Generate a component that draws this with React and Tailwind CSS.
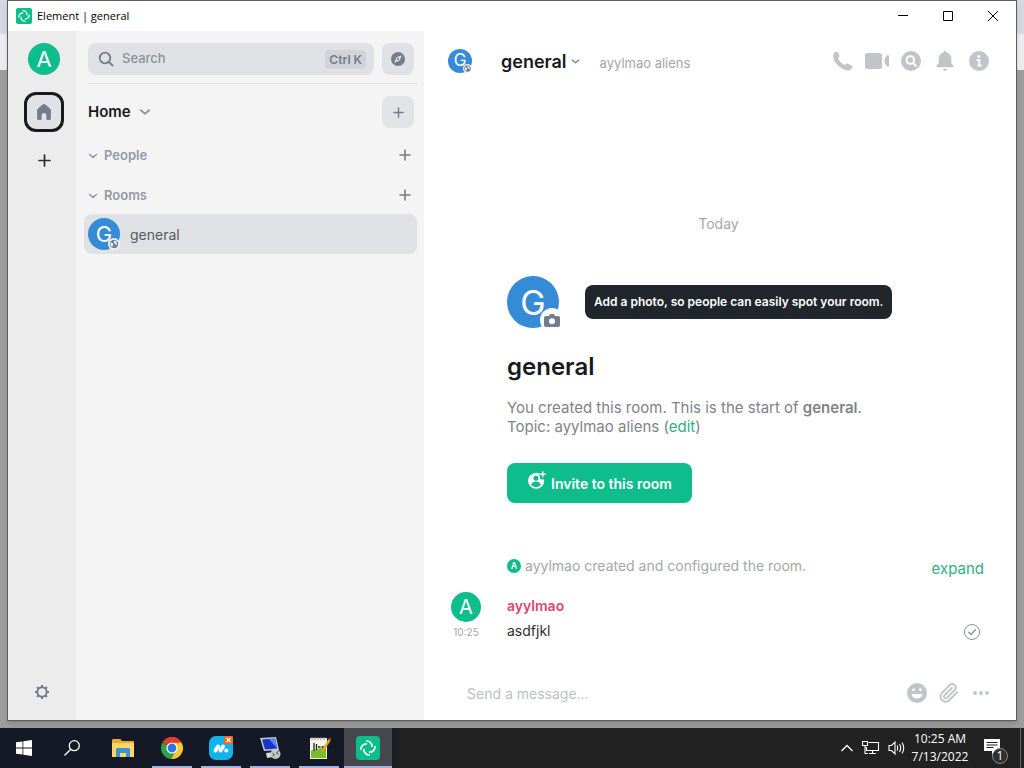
import React from "react";

function ElementMark({ className }) {
  return (
    <svg viewBox="0 0 54 54" className={className} fill="none" stroke="currentColor" strokeWidth="5.6" strokeLinecap="round" aria-hidden="true">
      {[0, 90, 180, 270].map((a) => (
        <path key={a} d="M22.68 3.24A18.36 18.36 0 0 1 41.04 21.6" transform={`rotate(${a} 27 27)`} />
      ))}
    </svg>
  );
}

function Plus({ className }) {
  return (
    <svg viewBox="0 0 12 12" className={className} fill="none" stroke="currentColor" strokeWidth="1.6" strokeLinecap="round" aria-hidden="true">
      <path d="M6 1v10M1 6h10" />
    </svg>
  );
}

function Chevron({ className }) {
  return (
    <svg viewBox="0 0 10 10" className={className} fill="none" stroke="currentColor" strokeWidth="1.6" strokeLinecap="round" strokeLinejoin="round" aria-hidden="true">
      <path d="M1.5 3.500 5 6.400l3.500-2.900" />
    </svg>
  );
}

function Globe({ className }) {
  return (
    <svg viewBox="0 0 12 12" className={className} aria-hidden="true">
      <circle cx="6" cy="6" r="6" fill="#f4f5f6" />
      <circle cx="6" cy="6" r="4.3" fill="#737d8c" />
      <path d="M2.6 4.2 5 5.4l.4 1.4-1 1 .1 1.7L2.6 7.6zM6 2.4l2.8 1.2-.6 1.4 1.3 1.6-1.3.4-1.1-1.3L6 5z" fill="#f4f5f6" />
    </svg>
  );
}

function RoomAvatar({ size, text, badge }) {
  return (
    <span className={`relative flex shrink-0 items-center justify-center rounded-full bg-[#368bd6] text-white ${size} ${text}`}>
      G
      <Globe className={`absolute right-0 bottom-0 ${badge}`} />
    </span>
  );
}

function UserAvatar({ className }) {
  return <span className={`flex shrink-0 items-center justify-center rounded-full bg-[#0dbd8b] text-white ${className}`}>A</span>;
}

function TitleBar() {
  return (
    <header className="flex h-[30px] shrink-0 items-center bg-white pr-px pl-2 font-['Open_Sans',sans-serif] text-black">
      <span className="flex size-4 items-center justify-center rounded-xs bg-[#0dbd8b] text-white">
        <ElementMark className="size-3" />
      </span>
      <h1 className="ml-[5px] grow text-[11px]">Element | general</h1>
      <button aria-label="Minimize" className="flex h-full w-[45px] items-center justify-center">
        <svg viewBox="0 0 10 10" className="size-[10px]" stroke="currentColor"><path d="M0 4.5h10" /></svg>
      </button>
      <button aria-label="Maximize" className="flex h-full w-[45px] items-center justify-center">
        <svg viewBox="0 0 10 10" className="size-[10px]" fill="none" stroke="currentColor"><path d="M.5.5h9v9h-9z" /></svg>
      </button>
      <button aria-label="Close" className="flex h-full w-[45px] items-center justify-center">
        <svg viewBox="0 0 10 10" className="size-[10px]" stroke="currentColor"><path d="M0 0l10 10M10 0L0 10" /></svg>
      </button>
    </header>
  );
}

function SpaceRail() {
  return (
    <nav aria-label="Spaces" className="flex w-[68px] shrink-0 flex-col items-center bg-[#ececec] pt-3 pr-1 pl-2 pb-4">
      <button aria-label="User menu"><UserAvatar className="size-8 text-[22px]" /></button>
      <button aria-label="Home" className="mt-[17px] flex size-10 items-center justify-center rounded-xl border-3 border-[#17191c] bg-[#e0e2e8] text-[#737d8c]">
        <svg viewBox="0 0 16 18" className="h-[18px] w-4" fill="currentColor">
          <path d="M7 1.300a1.600 1.600 0 0 1 2 0l5 4.300c.6.5.9 1.200.9 1.900v8c0 .8-.6 1.500-1.400 1.500h-2.300c-.5 0-.8-.3-.8-.8v-3.700a2.400 2.400 0 0 0-4.800 0v3.700c0 .5-.3.8-.8.8H2.500c-.8 0-1.400-.7-1.400-1.500v-8c0-.7.300-1.400.9-1.900z" />
        </svg>
      </button>
      <button aria-label="Create a space" className="mt-2 flex size-10 items-center justify-center text-[#2b2d31]">
        <Plus className="size-[13px]" />
      </button>
      <button aria-label="Quick settings" className="mt-auto mr-1 flex size-6 items-center justify-center text-[#737d8c]">
        <svg viewBox="0 0 16 16" className="size-4" fill="none" stroke="currentColor">
          <circle cx="8" cy="8" r="4.700" strokeWidth="1.900" />
          <path d="M8 1v2.500M8 12.500V15M1 8h2.500M12.500 8H15M3.050 3.050l1.800 1.800M11.150 11.150l1.800 1.800M3.050 12.950l1.800-1.800M11.150 4.850l1.800-1.800" strokeWidth="2" />
        </svg>
      </button>
    </nav>
  );
}

function SectionHeader({ label }) {
  return (
    <div className="flex h-10 items-center pr-1.5">
      <button className="flex grow items-center text-[13px] font-semibold text-[#929aa5]">
        <Chevron className="mr-1.5 size-[10px]" />
        {label}
      </button>
      <button aria-label={`Add ${label}`} className="pb-0.5 text-[#737d8c]"><Plus className="size-3" /></button>
    </div>
  );
}

function RoomList() {
  return (
    <aside className="flex w-[348px] shrink-0 flex-col bg-[#f4f4f5] pt-3 pr-[7px] pl-3">
      <div className="flex gap-2 pr-[3px]">
        <div className="flex h-8 grow items-center rounded-lg bg-[#dfe1e5] pr-2 pl-[10px]">
          <svg viewBox="0 0 16 16" className="size-4 text-[#737d8c]" fill="none" stroke="currentColor" strokeWidth="1.800" strokeLinecap="round" aria-hidden="true">
            <circle cx="7" cy="7" r="5.300" /><path d="m11 11 3.500 3.500" />
          </svg>
          <input aria-label="Search" placeholder="Search" className="ml-2 w-10 grow bg-transparent text-[13px] font-medium outline-none placeholder:text-[#8b929c]" />
          <kbd className="rounded bg-[#d0d4d9] px-1 font-[Inter,sans-serif] text-[12px] leading-[19px] font-semibold text-[#737d8c]">Ctrl K</kbd>
        </div>
        <button aria-label="Explore rooms" className="flex size-8 items-center justify-center rounded-lg bg-[#dfe1e6]">
          <svg viewBox="0 0 14 14" className="size-[14px]">
            <circle cx="7" cy="7" r="7" fill="#737d8c" />
            <path d="m10.800 3.200-2.200 5.400-5.400 2.200 2.200-5.400z" fill="#e3e6eb" />
            <circle cx="7" cy="7" r="1.100" fill="#737d8c" />
          </svg>
        </button>
      </div>
      <hr className="mt-2 border-[#e1e3e6]" />
      <div className="mt-3 mb-2 flex h-8 items-center justify-between pr-[3px]">
        <button className="flex items-center gap-2 text-[15px] font-semibold text-[#17191c]">
          Home<Chevron className="size-3 text-[#8d97a5]" />
        </button>
        <button aria-label="Add" className="flex size-8 items-center justify-center rounded-lg bg-[#e1e3e6] text-[#737d8c]"><Plus className="size-[11px]" /></button>
      </div>
      <SectionHeader label="People" />
      <SectionHeader label="Rooms" />
      <a href="#general" className="-mt-0.5 -ml-1 flex h-10 items-center gap-[10px] rounded-lg bg-[#e0e1e4] pl-1 text-[14px] text-[#565a60]">
        <RoomAvatar size="size-8" text="text-[22px]" badge="size-3" />
        general
      </a>
    </aside>
  );
}

function RoomHeader() {
  const cls = "size-5";
  return (
    <header className="flex h-15 shrink-0 items-center pr-[27px] pl-6">
      <RoomAvatar size="size-6" text="text-[17px]" badge="size-[9px]" />
      <button className="ml-[29px] flex items-center gap-1 text-[18px] font-semibold text-[#17191c]">
        general<Chevron className="size-[9px] text-[#838b97]" />
      </button>
      <span className="ml-5 grow pt-1.5 text-[13px] text-[#a3a6aa]">ayylmao aliens</span>
      <div className="flex gap-[14px] text-[#c1c5ca]">
        <button aria-label="Voice call">
          <svg viewBox="0 0 20 20" className={cls} fill="currentColor">
            <path d="M.7 2.700C1.300 1.500 2.600.4 3.500.4c.6 0 1 .5 1.400 1.200l1.500 2.600c.4.700.2 1.300-.2 1.800l-.9 1c-.2.3-.2.7 0 1.100 1.300 2.500 3.300 4.400 5.700 5.700.4.2.800.2 1.100 0l1.200-1c.5-.4 1.100-.5 1.700-.100l3.200 1.900c.8.5 1.300.9 1.300 1.500 0 1.200-1.700 3.200-3.700 3.400C9.500 19.900.4 12.500.2 5.300c0-1 .1-1.900.5-2.600z" />
          </svg>
        </button>
        <button aria-label="Video call">
          <svg viewBox="0 0 24 20" className="-mx-0.5 h-5 w-6" fill="currentColor">
            <rect x="0" y="2" width="17" height="16" rx="2.500" />
            <path d="M24 5.500v9c0 1.100-1.200 1.500-2 .8-1-.9-2.500-2.200-2.500-5.300S21 5.600 22 4.700c.8-.7 2-.3 2 .8z" />
          </svg>
        </button>
        <button aria-label="Search room">
          <svg viewBox="0 0 20 20" className={cls}>
            <circle cx="10" cy="10" r="10" fill="currentColor" />
            <circle cx="9.300" cy="9" r="3.800" fill="none" stroke="#fff" strokeWidth="2" />
            <path d="m12 12 2.800 2.800" stroke="#fff" strokeWidth="2.200" strokeLinecap="round" />
          </svg>
        </button>
        <button aria-label="Notifications">
          <svg viewBox="0 0 20 20" className={cls} fill="currentColor">
            <path d="M10 0c1 0 1.700.7 1.700 1.600 2.800.7 4.600 3 4.600 6v4.600l1.900 2.200c.8 1 .3 1.900-.8 1.900H2.600c-1.100 0-1.600-.9-.8-1.900l1.900-2.200V7.600c0-3 1.800-5.300 4.600-6C8.300.7 9 0 10 0zM8 18h4c0 1.200-.9 2-2 2s-2-.8-2-2z" />
          </svg>
        </button>
        <button aria-label="Room info">
          <svg viewBox="0 0 20 20" className={cls}>
            <circle cx="10" cy="10" r="10" fill="currentColor" />
            <circle cx="9.800" cy="5.500" r="1.500" fill="#fff" />
            <path d="M8.300 9h2v5.300m-1.300.2h3" fill="none" stroke="#fff" strokeWidth="2" strokeLinecap="round" strokeLinejoin="round" />
          </svg>
        </button>
      </div>
    </header>
  );
}

function Timeline() {
  return (
    <section className="flex grow flex-col pr-8 pb-6 pl-[27px]">
      <p className="mt-auto -mr-0.5 text-center text-[14px] leading-5 text-[#a3a6aa]">Today</p>
      <div className="mt-[42px] flex flex-col items-start pl-14">
        <div className="flex items-center gap-[26px]">
          <button aria-label="Upload room photo" className="relative flex size-[52px] items-center justify-center rounded-full bg-[#368bd6] text-[34px] text-white">
            G
            <span className="absolute -right-[5px] -bottom-1 flex size-6 items-center justify-center rounded-full bg-white">
              <svg viewBox="0 0 16 14" className="mt-0.5 w-4" fill="#737d8c">
                <path fillRule="evenodd" d="M5 2l.6-1.200c.2-.5.600-.8 1.100-.8h2.600c.5 0 .9.300 1.100.8L11 2h3a2 2 0 0 1 2 2v7a2 2 0 0 1-2 2H2a2 2 0 0 1-2-2V4c0-1.100.900-2 2-2zm3 2.300a3 3 0 1 0 0 6 3 3 0 0 0 0-6z" />
              </svg>
            </span>
          </button>
          <div role="tooltip" className="rounded-lg bg-[#21262c] px-[9px] text-[12px] leading-[34px] font-semibold text-white">Add a photo, so people can easily spot your room.</div>
        </div>
        <h2 className="mt-[23px] text-[24px] leading-8 font-semibold text-[#17191c]">general</h2>
        <p className="mt-[15px] text-[15px] leading-[19px] text-[#7f8388]">
          You created this room. This is the start of <b className="font-semibold">general</b>.<br />
          Topic: ayylmao aliens (<a href="#edit" className="text-[#2fae89]">edit</a>)
        </p>
        <button className="mt-[27px] flex h-10 items-center gap-1 rounded-lg bg-[#0dbd8b] px-5 text-[14px] font-semibold text-white">
          <svg viewBox="0 0 20 20" className="mb-1 size-5" aria-hidden="true">
            <path fill="#fff" d="M13 2.800A8 8 0 1 0 17 8.500h-2.300A1.500 1.500 0 0 1 13 7V5.500A1.500 1.500 0 0 1 13 2.800z" />
            <path d="M15.700.7v5M13.200 3.200h5" stroke="#fff" strokeWidth="1.400" strokeLinecap="round" />
            <circle cx="9" cy="7.300" r="2.500" fill="#0dbd8b" />
            <path d="M4 14c1-2.500 3-3.500 5-3.500s4 1 5 3.500c-1.300 1.300-3 2-5 2s-3.700-.7-5-2z" fill="#0dbd8b" />
          </svg>
          Invite to this room
        </button>
      </div>
      <div className="mt-[53px] flex items-center pl-14 text-[14px] leading-5 text-[#a3a6aa]">
        <UserAvatar className="mr-1 size-[14px] text-[9px] font-semibold" />
        <span className="grow">ayylmao created and configured the room.</span>
        <button className="-mb-1.5 text-[15px] text-[#2fae89]">expand</button>
      </div>
      <article className="mt-4 flex">
        <div className="flex w-[30px] flex-col items-center">
          <UserAvatar className="size-[30px] text-[20px]" />
          <time className="text-[10px] leading-5 text-[#a3a6aa]">10:25</time>
        </div>
        <div className="ml-[26px] grow pt-1">
          <h3 className="text-[14px] leading-5 font-semibold text-[#d9486e]">ayylmao</h3>
          <p className="mt-1 text-[14px] leading-[22px] text-[#2e2f32]">asdfjkl</p>
        </div>
        <svg viewBox="0 0 16 16" className="mr-1 mb-0.5 size-4 self-end text-[#8d9299]" fill="none" stroke="currentColor" role="img" aria-label="Your message was sent">
          <circle cx="8" cy="8" r="7.500" />
          <path d="m4.800 8.300 2.300 2.200 4.300-4.700" strokeWidth="1.400" strokeLinecap="round" />
        </svg>
      </article>
    </section>
  );
}

function Composer() {
  return (
    <footer className="flex h-[54px] shrink-0 items-center gap-3 pr-[25px] pl-[43px] text-[#c1c5ca]">
      <input aria-label="Send a message" placeholder="Send a message…" className="min-w-0 grow bg-transparent text-[14px] outline-none placeholder:text-[#bdc0c4]" />
      <button aria-label="Emoji">
        <svg viewBox="0 0 20 20" className="size-5">
          <circle cx="10" cy="10" r="10" fill="currentColor" />
          <circle cx="6.600" cy="6.800" r="1.400" fill="#fff" /><circle cx="13.400" cy="6.800" r="1.400" fill="#fff" />
          <path d="M4.600 11h10.800c0 2.700-2.400 4.600-5.400 4.600S4.600 13.700 4.600 11z" fill="#fff" />
        </svg>
      </button>
      <button aria-label="Attachment">
        <svg viewBox="0 0 24 24" className="size-5" fill="none" stroke="currentColor" strokeWidth="2.300" strokeLinecap="round">
          <path d="m22 11-9.700 9.700a6.200 6.200 0 0 1-8.800-8.800l9.700-9.700a4.200 4.200 0 0 1 5.900 5.900l-9.600 9.700a2.100 2.100 0 0 1-3-3l8.800-8.800" />
        </svg>
      </button>
      <button aria-label="More options">
        <svg viewBox="0 0 20 20" className="size-5" fill="currentColor"><circle cx="4" cy="10" r="1.900" /><circle cx="10" cy="10" r="1.900" /><circle cx="16" cy="10" r="1.900" /></svg>
      </button>
    </footer>
  );
}

const apps = [
  {
    name: "File Explorer",
    icon: (
      <svg viewBox="0 0 24 24" className="size-6">
        <path d="M1 4.500c0-.8.500-1.500 1.300-1.500h7l1.800 2H22c.6 0 1 .5 1 1v14H1z" fill="#e9ae31" />
        <path d="M1 7h22v14H1z" fill="#fbd866" />
        <path d="M5 21v-7.500c0-1 .7-1.500 1.500-1.500h11c.8 0 1.500.5 1.500 1.500V21h-4v-4H9v4z" fill="#3e94cf" />
      </svg>
    ),
  },
  {
    name: "Chrome",
    running: true,
    icon: (
      <svg viewBox="0 0 24 24" className="size-6">
        <path d="M12 12 2.500 6.500A11 11 0 0 1 21.500 6.500z" fill="#e33b2e" />
        <path d="M2.500 6.500A11 11 0 0 0 11 23l5.500-8.500L12 12z" fill="#2ba24c" />
        <path d="M21.500 6.500A11 11 0 0 1 11 23l5.500-9L14 6.500z" fill="#fcc934" />
        <path d="M2.500 6.500h19A11 11 0 0 0 2.500 6.500z" fill="#e33b2e" />
        <circle cx="12" cy="12" r="5.600" fill="#fff" /><circle cx="12" cy="12" r="4.400" fill="#2f72e4" />
      </svg>
    ),
  },
  {
    name: "MobaXterm",
    running: true,
    icon: (
      <svg viewBox="0 0 24 24" className="size-6">
        <rect width="24" height="24" rx="7" fill="#10b3ec" />
        <path d="m6.500 14.500 2.500-4M11.500 14.500l2.500-4" stroke="#fff" strokeWidth="4" strokeLinecap="round" />
        <circle cx="17.300" cy="14.600" r="2" fill="#fff" />
        <rect x="15" width="9" height="8" rx="1" fill="#ef6a25" />
        <path d="m17.500 2 4 4m0-4-4 4" stroke="#fff" strokeWidth="1.400" />
      </svg>
    ),
  },
  {
    name: "Remote Desktop",
    running: true,
    icon: (
      <svg viewBox="0 0 24 24" className="size-6">
        <path d="m2 2 16-1 3 13-15 1z" fill="#c7ccd6" /><path d="m4 3.500 13-1 2.300 10L7 13.500z" fill="#1735c8" />
        <path d="m11 3 6-.5 2.300 10z" fill="#5d87f0" />
        <path d="m8 17 9-1 3 4-11 2z" fill="#d9dce1" />
        <circle cx="17.500" cy="18" r="5" fill="#c3c7c7" />
        <path d="m14.500 17 2 2-1.800 1.500M20.500 15l-2 2 2 1.500" stroke="#424b4b" fill="none" />
      </svg>
    ),
  },
  {
    name: "Notepad++",
    running: true,
    icon: (
      <svg viewBox="0 0 24 24" className="size-6">
        <path d="M3 2h17v21H3z" fill="#f3f5ea" /><path d="M4 14.500 19 11v11H4z" fill="#79bd2c" />
        <path d="M5 1v3M8 1v3M11 1v3M14 1v3M17 1v3" stroke="#888" />
        <path d="M7 7v8M9.500 8v6M11 11h2.500M14.500 11H17" stroke="#222" strokeWidth="1.300" />
        <path d="m21.500 3-6 10-1.500 4 3-2.500L23.500 5z" fill="#eaa51c" /><path d="m21.500 3 2 2 .5-2.500-1.500-.5z" fill="#d44b2a" />
      </svg>
    ),
  },
  {
    name: "Element",
    running: true,
    active: true,
    icon: <span className="flex size-6 items-center justify-center rounded bg-[#0dbd8b] text-white"><ElementMark className="size-4" /></span>,
  },
];

function Taskbar() {
  return (
    <footer className="flex h-10 shrink-0 bg-[linear-gradient(to_right,#141925_38%,#222222_39%)] font-['Open_Sans',sans-serif] text-white">
      <button aria-label="Start" className="flex w-12 items-center justify-center">
        <svg viewBox="0 0 16 16" className="size-4" fill="currentColor"><path d="M0 2.300 6.500 1.400v6.200H0zM7.300 1.300 16 0v7.600H7.300zM0 8.400h6.500v6.200L0 13.700zM7.300 8.400H16V16l-8.700-1.300z" /></svg>
      </button>
      <button aria-label="Search Windows" className="flex w-12 items-center justify-center">
        <svg viewBox="0 0 16 16" className="size-4" fill="none" stroke="currentColor" strokeWidth="1.300"><circle cx="10.300" cy="5.700" r="5" /><path d="M6.700 9.300.5 15.500" /></svg>
      </button>
      <div className="ml-[3px] flex grow gap-px">
        {apps.map((app) => (
          <button key={app.name} aria-label={app.name} className={`flex w-12 flex-col items-center ${app.active ? "bg-[#47484d]" : ""}`}>
            <span className="flex grow items-center">{app.icon}</span>
            <span className={`-mt-0.5 h-0.5 ${app.active ? "w-12" : "w-10"} ${app.running ? "bg-[#a9b3e3]" : ""}`} />
          </button>
        ))}
      </div>
      <div className="flex items-center gap-2">
        <button aria-label="Show hidden icons">
          <svg viewBox="0 0 14 14" className="size-[14px]" fill="none" stroke="currentColor" strokeWidth="1.300"><path d="m1.500 10 5.500-5.500 5.500 5.500" /></svg>
        </button>
        <button aria-label="Network">
          <svg viewBox="0 0 18 16" className="h-4 w-[18px]" fill="none" stroke="currentColor" strokeWidth="1.100"><path d="M6.500 2.500h10v8H4.500V7M.5 1.500h5v4h-5zM3 5.500v8h3M10.500 10.500v3M7 13.500h7" /></svg>
        </button>
        <button aria-label="Volume">
          <svg viewBox="0 0 18 16" className="h-4 w-[18px]" fill="none" stroke="currentColor" strokeWidth="1.100"><path d="M1 5.500h2.500L7 2v12l-3.500-3.500H1zM9 5.500q1.500 2.500 0 5M11.500 4q2.500 4 0 8M14 2.500q3.500 5.500 0 11" /></svg>
        </button>
        <button className="-ml-1 w-15 text-center text-[12px] leading-[18px]"><time>10:25 AM<br />7/13/2022</time></button>
        <button aria-label="Notifications, 1 new" className="relative mr-[14px] ml-1 size-6">
          <svg viewBox="0 0 24 24" className="size-6">
            <path d="M2 3h16v12h-4l-4 4v-4H2z" fill="#fff" />
            <path d="M4.500 6.500h11M4.500 9h11M4.500 11.500h7" stroke="#222" />
          </svg>
          <span className="absolute -right-0.5 -bottom-1 flex size-4 items-center justify-center rounded-full border border-[#8a8a8a] bg-[#303030] text-[12px] leading-none">1</span>
        </button>
      </div>
      <button aria-label="Show desktop" className="w-1 border-l border-[#666]" />
    </footer>
  );
}

export default function App() {
  return (
    <div className="flex h-screen flex-col overflow-hidden font-[Inter,sans-serif]">
      <div className="flex min-h-0 grow flex-col bg-[linear-gradient(to_bottom,#d5d7e2_34px,#ececee_34px,#ececee_70px,#9c9c9c_70px)] px-[7px] pb-[7px]">
        <div className="flex min-h-0 grow flex-col border border-[#5c5c5c] bg-white shadow-md">
          <TitleBar />
          <div className="flex min-h-0 grow">
            <SpaceRail />
            <RoomList />
            <main className="flex min-w-0 grow flex-col bg-white">
              <RoomHeader />
              <Timeline />
              <Composer />
            </main>
          </div>
        </div>
      </div>
      <Taskbar />
    </div>
  );
}
